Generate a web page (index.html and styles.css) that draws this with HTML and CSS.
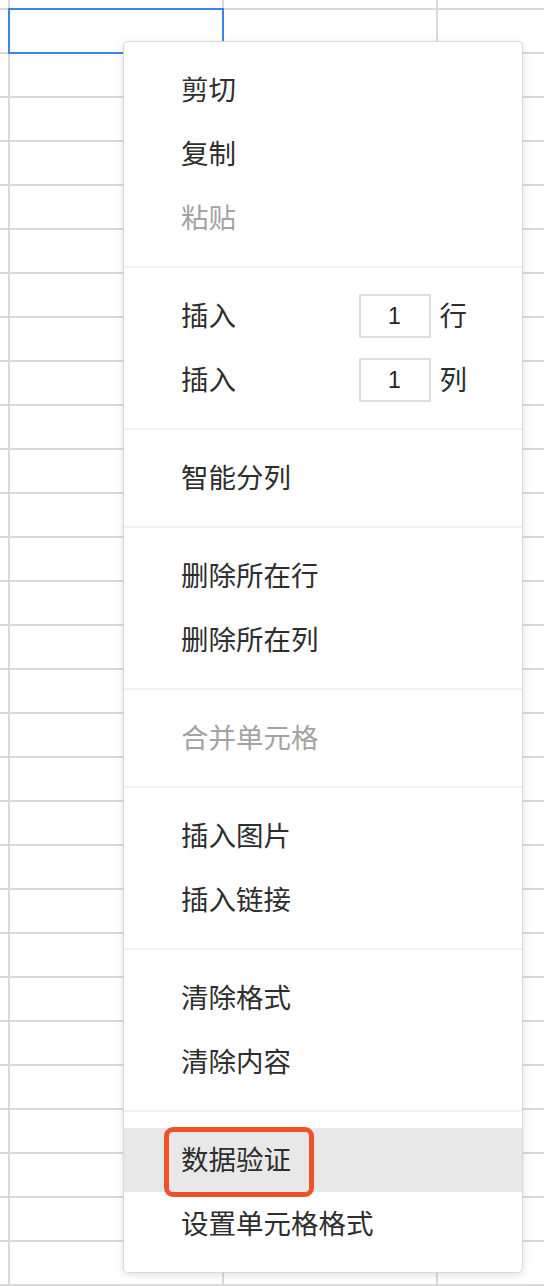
FILE: index.html
```html
<!DOCTYPE html>
<html lang="zh-CN">
<head>
<meta charset="utf-8">
<title>Context menu</title>
<link rel="stylesheet" href="styles.css">
</head>
<body>
<div class="sheet">
  <div class="cell-selected"></div>

  <div class="menu">
    <div class="group">
      <div class="item">剪切</div>
      <div class="item">复制</div>
      <div class="item disabled">粘贴</div>
    </div>
    <div class="sep"></div>
    <div class="group">
      <div class="item item-input"><span class="label">插入</span><span class="num">1</span><span class="unit">行</span></div>
      <div class="item item-input"><span class="label">插入</span><span class="num">1</span><span class="unit">列</span></div>
    </div>
    <div class="sep"></div>
    <div class="group">
      <div class="item">智能分列</div>
    </div>
    <div class="sep"></div>
    <div class="group">
      <div class="item">删除所在行</div>
      <div class="item">删除所在列</div>
    </div>
    <div class="sep"></div>
    <div class="group">
      <div class="item disabled">合并单元格</div>
    </div>
    <div class="sep"></div>
    <div class="group">
      <div class="item">插入图片</div>
      <div class="item">插入链接</div>
    </div>
    <div class="sep"></div>
    <div class="group">
      <div class="item">清除格式</div>
      <div class="item">清除内容</div>
    </div>
    <div class="sep"></div>
    <div class="group">
      <div class="item active">数据验证<span class="mark"></span></div>
      <div class="item">设置单元格格式</div>
    </div>
  </div>
</div>
</body>
</html>
```

FILE: styles.css
```css
html, body {
  margin: 0;
  padding: 0;
}

body {
  width: 544px;
  height: 1286px;
  overflow: hidden;
  background-color: #ffffff;
  background-image:
    linear-gradient(to right, #dadada 2px, transparent 2px),
    linear-gradient(to bottom, #dadada 2px, transparent 2px);
  background-size: 214px 100%, 100% 44px;
  background-position: 8px 0, 0 8px;
  font-family: "Noto Sans CJK SC", "Noto Sans", sans-serif;
  color: #333333;
}

.sheet {
  position: relative;
  width: 544px;
  height: 1286px;
  padding: 8px 0 0 8px;
  box-sizing: border-box;
}

.cell-selected {
  width: 216px;
  height: 46px;
  border: 2px solid #3a86e8;
  box-sizing: border-box;
}

.menu {
  position: absolute;
  left: 123px;
  top: 41px;
  width: 400px;
  box-sizing: border-box;
  background: #ffffff;
  border: 1px solid #d8d8d8;
  border-radius: 5px;
  box-shadow: 0 2px 8px rgba(0, 0, 0, 0.12);
  padding: 16px 0;
}

.group {
  display: flex;
  flex-direction: column;
}

.item {
  position: relative;
  height: 64px;
  box-sizing: border-box;
  display: flex;
  align-items: center;
  padding: 0 55px 4px 57px;
  font-size: 27.5px;
  color: #2e2e2e;
  white-space: nowrap;
}

.item.disabled {
  color: #a3a3a3;
}

.item.active {
  background: #e8e8e8;
}

.item-input {
  padding-bottom: 0;
}

.item-input .label {
  flex: 1;
  position: relative;
  top: -2px;
}

.item-input .num {
  width: 72px;
  height: 44px;
  box-sizing: border-box;
  border: 2px solid #dedede;
  font-family: "Liberation Sans", "Noto Sans", sans-serif;
  font-size: 23px;
  line-height: 40px;
  text-align: center;
  color: #222222;
}

.item-input .unit {
  margin-left: 9px;
  position: relative;
  top: -2px;
}

.sep {
  height: 2px;
  background: #f1f1f1;
  margin: 16px 0;
}

.mark {
  position: absolute;
  left: 40px;
  top: -1px;
  width: 150px;
  height: 70px;
  box-sizing: border-box;
  border: 5px solid #ef5128;
  border-radius: 9px;
}
```
